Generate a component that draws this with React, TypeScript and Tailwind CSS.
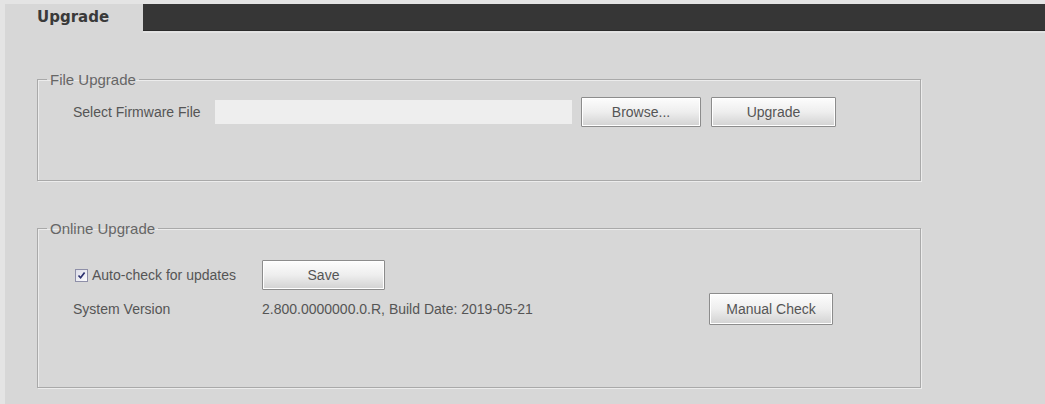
const btn =
  "flex items-center justify-center h-[30px] border border-[#8c8c8c] rounded-[1px] bg-gradient-to-b from-[#fdfdfd] via-[#eeeeee] to-[#d2d2d2] text-[#555] text-[14px] shadow-[inset_0_0_0_1px_#ffffff]"

function Check() {
  return (
    <span className="flex items-center justify-center w-[13px] h-[13px] border border-[#8e8fa8] bg-gradient-to-br from-[#dcdde8] to-[#fbfbfd]">
      <svg width="9" height="9" viewBox="0 0 9 9">
        <path d="M1.5 4.5 L3.6 6.8 L7.6 1.6" fill="none" stroke="#2a2f6e" strokeWidth="1.7" />
      </svg>
    </span>
  )
}

export default function App() {
  return (
    <div className="w-[1045px] h-[404px] overflow-hidden bg-[#d7d7d7] border-t-4 border-l-[5px] border-[#e4e4e4] font-['Liberation_Sans',Arial,sans-serif] text-[14px] text-[#555]">
      {/* Tab bar */}
      <div className="flex h-[27px]">
        <div className="w-[138px] pl-[32px] flex items-center font-['DejaVu_Sans',sans-serif] font-bold text-[15px] text-[#3a3a3a]">
          Upgrade
        </div>
        <div className="flex-1 bg-[#363636] border-b border-[#2a2a2a]" />
      </div>
      <div className="h-[2px] ml-[138px] bg-[#e2e2e2]" />

      <div className="pl-[32px]">
        {/* File Upgrade */}
        <fieldset className="mt-[38px] w-[884px] h-[110px] border border-[#a9a9a9] shadow-[inset_1px_1px_0_#ececec,1px_1px_0_#ececec] pl-[35px]">
          <legend className="ml-[-26px] px-[3px] text-[#666] text-[15px] leading-[17px]">File Upgrade</legend>
          <div className="flex items-center mt-[9px]">
            <span className="w-[142px]">Select Firmware File</span>
            <div className="w-[357px] h-[24px] bg-[#eeeeee]" />
            <button className={`${btn} ml-[9px] w-[120px]`}>Browse...</button>
            <button className={`${btn} ml-[10px] w-[125px]`}>Upgrade</button>
          </div>
        </fieldset>

        {/* Online Upgrade */}
        <fieldset className="mt-[39px] w-[884px] h-[168px] border border-[#a9a9a9] shadow-[inset_1px_1px_0_#ececec,1px_1px_0_#ececec] pl-[35px]">
          <legend className="ml-[-26px] px-[3px] text-[#666] text-[15px] leading-[17px]">Online Upgrade</legend>
          <div className="flex items-center mt-[23px]">
            <div className="w-[189px] flex items-center">
              <span className="ml-[2px]">
                <Check />
              </span>
              <span className="ml-[4px]">Auto-check for updates</span>
            </div>
            <button className={`${btn} w-[123px]`}>Save</button>
          </div>
          <div className="flex items-center mt-[3px] h-[32px]">
            <span className="w-[189px]">System Version</span>
            <span className="w-[447px]">2.800.0000000.0.R, Build Date: 2019-05-21</span>
            <button className={`${btn} w-[124px] h-[32px]`}>Manual Check</button>
          </div>
        </fieldset>
      </div>
    </div>
  )
}
